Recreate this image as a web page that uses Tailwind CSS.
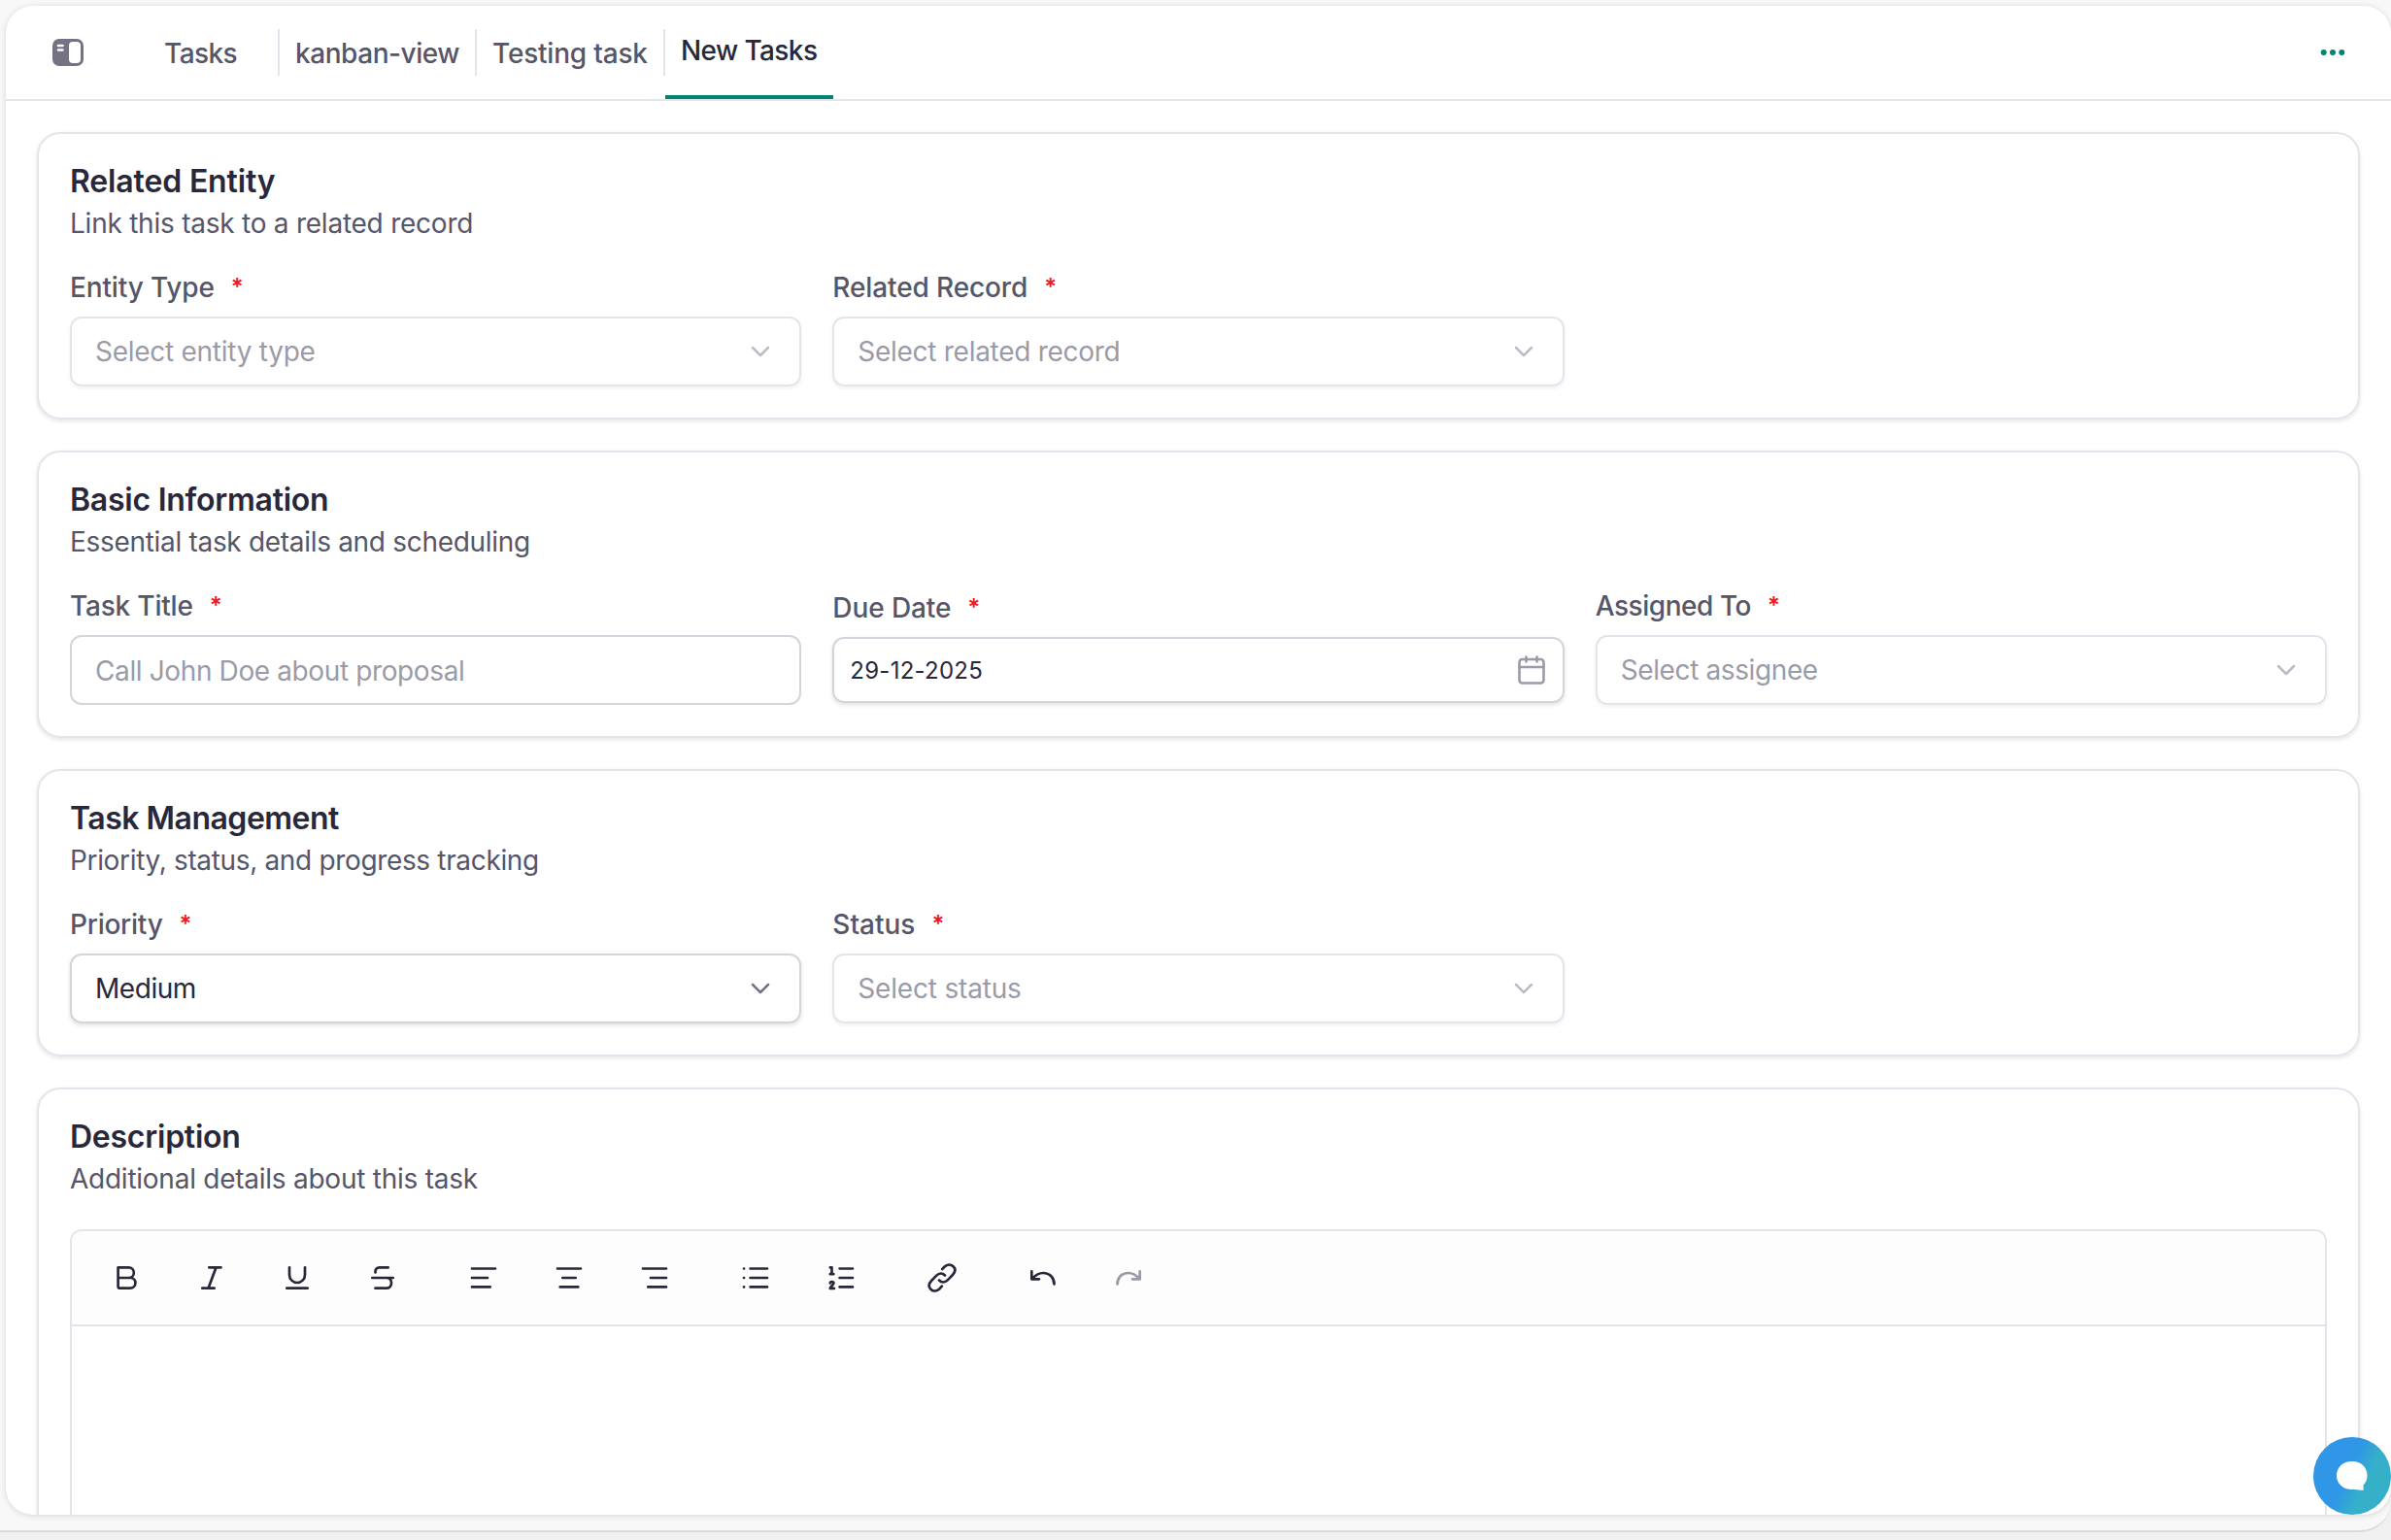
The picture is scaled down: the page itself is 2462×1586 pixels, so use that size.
<!DOCTYPE html>
<html lang="en">
<head>
<meta charset="utf-8">
<title>New Tasks</title>
<script src="https://cdn.jsdelivr.net/npm/@tailwindcss/browser@4"></script>
</head>
<body class="h-[1586px] w-[2462px] overflow-hidden bg-[#f0f0f0] font-['Inter',sans-serif] text-[28px] leading-[28px] text-[#565669]">
<svg class="hidden">
  <symbol id="chevron" viewBox="0 0 20 20"><path d="M2 6l8 8 8-8" fill="none" stroke="currentColor" stroke-width="2.5" stroke-linecap="round" stroke-linejoin="round"/></symbol>
</svg>
<div class="h-[1578px] rounded-br-[32px] border-b-2 border-[#d9d9e0] bg-[#f8f8f8] pt-1.5 pl-1.5">
  <div class="flex h-[1554px] flex-col overflow-hidden rounded-[28px] bg-white shadow-[0_1px_6px_rgba(0,0,0,0.14)]">
    <header class="flex h-[98px] shrink-0 border-b-2 border-[#e6e6e8] pl-12 font-medium">
      <svg class="mt-[34px] h-7 w-8" viewBox="0 0 32 28">
        <rect width="32" height="28" rx="7" fill="#737383"/>
        <rect x="17" y="3" width="12" height="22" rx="4" fill="#fff"/>
        <path d="M6 7h4.500M6 11.500h4.500" stroke="#fff" stroke-width="2.600" stroke-linecap="round"/>
      </svg>
      <nav class="ml-[68px] flex">
        <div class="mt-6 flex h-12 w-[134px] items-center border-r-2 border-[#e4e4ec] pt-px pl-[15px] tracking-[-0.6px]">Tasks</div>
        <div class="mt-6 flex h-12 w-[203px] items-center border-r-2 border-[#e4e4ec] pt-px pl-4 tracking-[-0.45px] whitespace-nowrap">kanban-view</div>
        <div class="mt-6 flex h-12 w-[194px] items-center border-r-2 border-[#e4e4ec] pt-px pl-4 tracking-[-0.2px] whitespace-nowrap">Testing task</div>
        <div class="flex w-[173px] items-center border-b-4 border-[#008573] pl-4 tracking-[-0.6px] whitespace-nowrap text-[#28283a]">New Tasks</div>
      </nav>
      <svg class="mt-[44px] mr-[47px] ml-auto h-2 w-[26px]" viewBox="0 0 26 8" fill="#008573"><circle cx="3.700" cy="4" r="3"/><circle cx="13" cy="4" r="3"/><circle cx="22.300" cy="4" r="3"/></svg>
    </header>
    <main class="flex flex-col gap-8 pt-8 pr-8 pl-8">
      <section class="h-[296px] shrink-0 rounded-3xl border-2 border-[#e4e4ec] px-8 pt-[33px] shadow-[0_2px_4px_rgba(0,0,0,0.1)]">
        <h2 class="text-[32px] leading-8 font-semibold tracking-[-0.15px] text-[#28283a]">Related Entity</h2>
        <p class="mt-[7px] leading-10 tracking-[-0.24px]">Link this task to a related record</p>
        <div class="mt-8 grid grid-cols-3 items-center gap-8">
          <div>
            <div class="flex gap-[17px] font-medium tracking-[-0.15px]">Entity Type <span class="text-[24px] font-semibold text-[#ec1c24]">*</span></div>
            <div class="mt-4 flex h-[72px] items-center justify-between rounded-xl border-2 border-[#e4e4ec] pr-[30px] pl-6 tracking-[-0.27px] text-[#9b9ba8] shadow-[0_2px_4px_rgba(0,0,0,0.06)]">Select entity type<svg class="size-5 text-[#bcbcc8]"><use href="#chevron"/></svg></div>
          </div>
          <div>
            <div class="flex gap-[17px] font-medium tracking-[-0.12px]">Related Record <span class="text-[24px] font-semibold text-[#ec1c24]">*</span></div>
            <div class="mt-4 flex h-[72px] items-center justify-between rounded-xl border-2 border-[#e4e4ec] pr-[30px] pl-6 tracking-[-0.28px] text-[#9b9ba8] shadow-[0_2px_4px_rgba(0,0,0,0.06)]">Select related record<svg class="size-5 text-[#bcbcc8]"><use href="#chevron"/></svg></div>
          </div>
        </div>
      </section>
      <section class="h-[296px] shrink-0 rounded-3xl border-2 border-[#e4e4ec] px-8 pt-[33px] shadow-[0_2px_4px_rgba(0,0,0,0.1)]">
        <h2 class="text-[32px] leading-8 font-semibold tracking-[-0.25px] text-[#28283a]">Basic Information</h2>
        <p class="mt-[7px] leading-10 tracking-[-0.31px]">Essential task details and scheduling</p>
        <div class="mt-8 grid grid-cols-3 items-center gap-8">
          <div>
            <div class="flex gap-[17px] font-medium tracking-[-0.2px]">Task Title <span class="text-[24px] font-semibold text-[#ec1c24]">*</span></div>
            <div class="mt-4 flex h-[72px] items-center rounded-xl border-2 border-[#d4d4dc] pt-0.5 pl-6 tracking-[-0.38px] text-[#9b9ba8]">Call John Doe about proposal</div>
          </div>
          <div>
            <div class="flex gap-[17px] font-medium tracking-[-0.1px]">Due Date <span class="text-[24px] font-semibold text-[#ec1c24]">*</span></div>
            <div class="mt-4 flex h-[68px] items-center justify-between rounded-xl border-2 border-[#d4d4dc] pr-4 pl-4 text-[24px] tracking-[0.25px] text-[#28283a] shadow-[0_2px_4px_rgba(0,0,0,0.12)]"><span class="pt-0.5">29-12-2025</span>
              <svg class="h-8 w-8" viewBox="0 0 32 32" fill="none" stroke="#9b9ba8" stroke-width="2.600" stroke-linecap="round" stroke-linejoin="round"><rect x="3.500" y="5" width="25" height="24.500" rx="3"/><path d="M3.500 13h25M10.500 2.500v5M21.500 2.500v5"/></svg>
            </div>
          </div>
          <div>
            <div class="flex gap-[17px] font-medium tracking-[-0.45px]">Assigned To <span class="text-[24px] font-semibold text-[#ec1c24]">*</span></div>
            <div class="mt-4 flex h-[72px] items-center justify-between rounded-xl border-2 border-[#e4e4ec] pr-[30px] pl-6 tracking-[-0.38px] text-[#9b9ba8] shadow-[0_2px_4px_rgba(0,0,0,0.06)]">Select assignee<svg class="size-5 text-[#bcbcc8]"><use href="#chevron"/></svg></div>
          </div>
        </div>
      </section>
      <section class="h-[296px] shrink-0 rounded-3xl border-2 border-[#e4e4ec] px-8 pt-[33px] shadow-[0_2px_4px_rgba(0,0,0,0.1)]">
        <h2 class="text-[32px] leading-8 font-semibold tracking-[-0.5px] text-[#28283a]">Task Management</h2>
        <p class="mt-[7px] leading-10 tracking-[-0.34px]">Priority, status, and progress tracking</p>
        <div class="mt-8 grid grid-cols-3 items-center gap-8">
          <div>
            <div class="flex gap-[17px] font-medium tracking-[-0.25px]">Priority <span class="text-[24px] font-semibold text-[#ec1c24]">*</span></div>
            <div class="mt-4 flex h-[72px] items-center justify-between rounded-xl border-2 border-[#d4d4dc] pr-[30px] pl-6 tracking-[-0.45px] text-[#28283a] shadow-[0_2px_4px_rgba(0,0,0,0.12)]">Medium<svg class="size-5 text-[#737383]"><use href="#chevron"/></svg></div>
          </div>
          <div>
            <div class="flex gap-[17px] font-medium">Status <span class="text-[24px] font-semibold text-[#ec1c24]">*</span></div>
            <div class="mt-4 flex h-[72px] items-center justify-between rounded-xl border-2 border-[#e4e4ec] pr-[30px] pl-6 tracking-[-0.18px] text-[#9b9ba8] shadow-[0_2px_4px_rgba(0,0,0,0.06)]">Select status<svg class="size-5 text-[#bcbcc8]"><use href="#chevron"/></svg></div>
          </div>
        </div>
      </section>
      <section class="h-[600px] shrink-0 rounded-3xl border-2 border-[#e4e4ec] px-8 pt-[33px] shadow-[0_2px_4px_rgba(0,0,0,0.1)]">
        <h2 class="text-[32px] leading-8 font-semibold tracking-[-0.25px] text-[#28283a]">Description</h2>
        <p class="mt-[7px] leading-10 tracking-[-0.25px]">Additional details about this task</p>
        <div class="mt-8 h-[450px] overflow-hidden rounded-xl border-2 border-[#e4e4ec]">
          <div class="flex h-[98px] items-center gap-6 border-b-2 border-[#e4e4ec] bg-[#fdfdfd] px-4 text-[#28283a] [&_svg]:size-8 [&_svg]:fill-none [&_svg]:stroke-current [&_svg]:stroke-[2.7px]">
            <div class="flex gap-2 [&>span]:flex [&>span]:w-20 [&>span]:justify-center">
              <span><svg viewBox="0 0 32 32" stroke-linecap="round" stroke-linejoin="round"><path d="M7.600 5.300H18.500a5.300 5.300 0 0 1 0 10.700H7.600M18.500 16h1.600a5.300 5.300 0 0 1 0 10.700H9.600a2 2 0 0 1-2-2V5.300"/></svg></span>
              <span><svg viewBox="0 0 32 32" stroke-linecap="round" stroke-linejoin="round"><path d="M13.300 5.300H25.500M6.300 26.700H18.700M20.500 5.300L12.500 26.700"/></svg></span>
              <span><svg viewBox="0 0 32 32" stroke-linecap="round" stroke-linejoin="round"><path d="M8 5.300V13a8 8 0 0 0 16 0V5.300M5.300 26.700H26.700"/></svg></span>
              <span><svg viewBox="0 0 32 32" stroke-linecap="round" stroke-linejoin="round"><path d="M21.700 5.300H12.500a4 4 0 0 0-4 4V10.500M5.300 16H26.700M20 16c3 0 5 2 5 5.300s-2.200 5.400-5 5.400H8.500"/></svg></span>
            </div>
            <div class="flex gap-2 [&>span]:flex [&>span]:w-20 [&>span]:justify-center">
              <span><svg viewBox="0 0 32 32" stroke-linecap="round"><path d="M4 6.500H28M4 16H20M4 25.400H22.700"/></svg></span>
              <span><svg viewBox="0 0 32 32" stroke-linecap="round"><path d="M4 6.500H28M9.300 16H22.700M6.700 25.400H25.300"/></svg></span>
              <span><svg viewBox="0 0 32 32" stroke-linecap="round"><path d="M4 6.500H28M12 16H28M9.300 25.400H28"/></svg></span>
            </div>
            <div class="flex gap-2 [&>span]:flex [&>span]:w-20 [&>span]:justify-center">
              <span><svg viewBox="0 0 32 32" stroke-linecap="round"><path d="M4 6.500h.1M4 16h.1M4 25.400h.1M10.600 6.500H28M10.600 16H28M10.600 25.400H28"/></svg></span>
              <span><svg viewBox="0 0 32 32" stroke-linecap="round"><path d="M14.600 6.500H28M14.600 16H28M14.600 25.400H28"/><path stroke-linejoin="round" d="M4.800 5.300H6.500V12.200M4.800 12.200H8.300M4.800 21.500c0-2 3.600-2 3.600 0 0 1.800-3.600 3.200-3.600 5.400H8.800"/></svg></span>
            </div>
            <div class="flex [&>span]:flex [&>span]:w-20 [&>span]:justify-center">
              <span><svg viewBox="0 0 32 32" stroke-linecap="round"><path d="M13 18.500c2.600 2.700 6 2.600 8.700-.1l5-5.100c2.900-3 3.700-6.200.9-9-2.800-2.700-6.400-2.200-9.200.5l-2.200 2.200"/><path d="M19 13.500c-2.600-2.700-6-2.600-8.700.1l-5 5.100c-2.900 3-3.700 6.200-.9 9 2.800 2.700 6.400 2.200 9.200-.5l2.200-2.600"/></svg></span>
            </div>
            <div class="flex gap-2 [&>span]:flex [&>span]:w-20 [&>span]:justify-center">
              <span><svg viewBox="0 0 32 32" stroke-linecap="round" stroke-linejoin="round"><path d="M4.300 9.300V17.300H12M4.800 16.800C8 13.500 11.500 11 16 11c7 0 11.500 5 11.500 11.500"/></svg></span>
              <span class="text-[#9b9ba8]"><svg viewBox="0 0 32 32" stroke-linecap="round" stroke-linejoin="round"><path d="M27.700 9.300V17.300H20M27.200 16.800C24 13.500 20.500 11 16 11c-7 0-11.500 5-11.500 11.500"/></svg></span>
            </div>
          </div>
        </div>
      </section>
    </main>
  </div>
</div>
<button class="absolute top-[1480px] left-[2382px] flex size-20 items-center justify-center rounded-full bg-linear-[115deg,#2f97e6_45%,#36b0c8_65%]">
  <svg class="h-[30px] w-8" viewBox="0 0 32 30" fill="#fff"><path d="M16 0c9 0 15.500 6 15.500 14.500 0 4-1.500 7.500-4 10V30l-9-1H16C6.500 29 0 23 0 14.500S6.500 0 16 0z"/></svg>
</button>
</body>
</html>
